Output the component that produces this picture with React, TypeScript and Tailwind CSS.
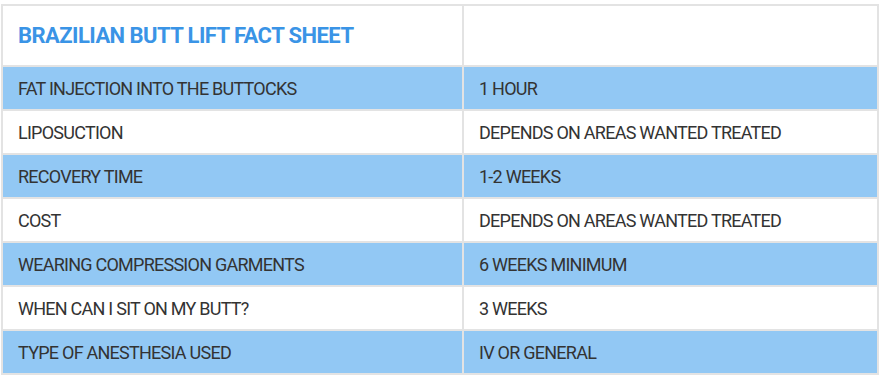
const rows: [string, string][] = [
  ['FAT INJECTION INTO THE BUTTOCKS', '1 HOUR'],
  ['LIPOSUCTION', 'DEPENDS ON AREAS WANTED TREATED'],
  ['RECOVERY TIME', '1-2 WEEKS'],
  ['COST', 'DEPENDS ON AREAS WANTED TREATED'],
  ['WEARING COMPRESSION GARMENTS', '6 WEEKS MINIMUM'],
  ['WHEN CAN I SIT ON MY BUTT?', '3 WEEKS'],
  ['TYPE OF ANESTHESIA USED', 'IV OR GENERAL'],
]

export default function App() {
  return (
    <div className="w-[880px] h-[380px] bg-white pl-[1px] pt-[4px] font-['Roboto',sans-serif]">
      <table className="w-[878px] border-collapse border-2 border-[#e3e3e3] table-fixed">
        <colgroup>
          <col className="w-[461px]" />
          <col />
        </colgroup>
        <tbody>
          <tr className="h-[61px] bg-white">
            <td className="border-2 border-[#e3e3e3] pl-[15px] pr-4 text-[22px] font-bold tracking-[-0.55px] text-[#3a94e6]">
              BRAZILIAN BUTT LIFT FACT SHEET
            </td>
            <td className="border-2 border-[#e3e3e3]" />
          </tr>
          {rows.map(([label, value], i) => (
            <tr key={label} className={i % 2 === 0 ? 'h-[44px] bg-[#92c8f4]' : 'h-[44px] bg-white'}>
              <td className="border-2 border-[#e3e3e3] pl-[15px] pr-4 text-[18px] tracking-[-0.75px] text-[#333]">{label}</td>
              <td className="border-2 border-[#e3e3e3] pl-[15px] pr-4 text-[18px] tracking-[-0.75px] text-[#333]">{value}</td>
            </tr>
          ))}
        </tbody>
      </table>
    </div>
  )
}
